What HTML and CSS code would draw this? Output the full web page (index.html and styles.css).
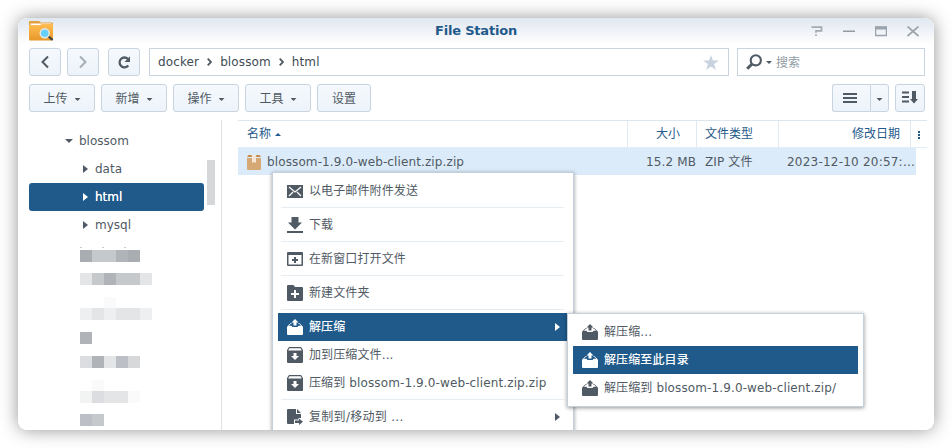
FILE: index.html
```html
<!DOCTYPE html>
<html lang="zh-CN">
<head>
<meta charset="utf-8">
<title>File Station</title>
<link rel="stylesheet" href="styles.css">
</head>
<body>
<svg class="sprite" width="0" height="0">
  <symbol id="extract" viewBox="0 0 16 16"><path d="M8 0l3.500 3.500H9.500V6.500h-3V3.500h-2z"/><path d="M4.500 4.500H3.500L.800 7.500M11.500 4.500h1L15.200 7.500" fill="none" stroke="currentColor" stroke-width=".9"/><path d="M0 8h16v7q0 1-1 1H1q-1 0-1-1zM0 8l1-1.200h3.500L5.500 8zM16 8l-1-1.200h-3.500L10.500 8z"/></symbol>
  <symbol id="archive" viewBox="0 0 16 16"><path fill-rule="evenodd" d="M2 0h12l2 3v12q0 1-1 1H1q-1 0-1-1V3zM2.400 1.200L1.200 3.500h13.600l-1.200-2.300zM6.500 6v3H4l4 4 4-4H9.500V6z"/></symbol>
</svg>
<main class="window">
  <header class="titlebar">
    <svg class="app-icon" width="24" height="20" viewBox="0 0 24 20">
      <defs><linearGradient id="fold" x1="0" y1="0" x2="0" y2="1"><stop offset="0" stop-color="#ffbd51"/><stop offset="1" stop-color="#e8982a"/></linearGradient></defs>
      <path fill="#e3a040" d="M0 1q0-1 1-1h9l2 1.500h11q1 0 1 1V7H0z"/><path fill="#fff" d="M1.500 2.500h21V5h-21z"/>
      <path fill="url(#fold)" d="M0 4h11l2-1h11v15q0 1.500-1 1.500H1q-1 0-1-1.500z"/>
      <path d="M19 15l4.500 4" stroke="#3a4046" stroke-width="2"/><circle cx="15.700" cy="12.200" r="4.500" fill="#66d0fa" stroke="#e5e8e3" stroke-width="1.400"/>
    </svg>
    <h1>File Station</h1>
    <div class="controls">
      <svg width="12" height="11" viewBox="0 0 12 11"><path d="M.500 1.200h10v3.600H5v2M5 8.200v1.800" fill="none" stroke="#a2a9b0" stroke-width="1.700"/></svg>
      <svg width="12" height="11" viewBox="0 0 12 11"><path d="M0 5.200h12" stroke="#929ba3" stroke-width="1.500"/></svg>
      <svg width="12" height="11" viewBox="0 0 12 11"><path d="M.6 1v8.500h10.800V1z" fill="none" stroke="#9ba4ac" stroke-width="1.300"/><path d="M0 .5h12v3H0z" fill="#9ba4ac"/></svg>
      <svg width="12" height="11" viewBox="0 0 12 11"><path d="M.5.500l11 9.500M11.500.500l-11 9.500" stroke="#9da5ac" stroke-width="1.700"/></svg>
    </div>
  </header>

  <nav class="navrow">
    <button class="btn nav"><svg width="8" height="14" viewBox="0 0 8 14"><path d="M7 1.500L1.500 7 7 12.500" fill="none" stroke="#505a64" stroke-width="2"/></svg></button>
    <button class="btn nav fwd"><svg width="8" height="14" viewBox="0 0 8 14"><path d="M1 1.500L6.500 7 1 12.500" fill="none" stroke="#a5adb5" stroke-width="2"/></svg></button>
    <button class="btn nav reload"><svg width="13" height="13" viewBox="0 0 13 13"><path d="M10.300 9.500A4.900 4.900 0 1 1 10 3" fill="none" stroke="#505a64" stroke-width="2.300"/><path d="M12 .300v5.700H6.500z" fill="#505a64"/></svg></button>
    <div class="address">
      <span>docker</span><svg class="sep" width="5" height="8" viewBox="0 0 5 8"><path d="M.7.700L4 4 .7 7.300" /></svg><span>blossom</span><svg class="sep" width="5" height="8" viewBox="0 0 5 8"><path d="M.7.700L4 4 .7 7.300" /></svg><span>html</span>
      <svg class="star" width="16" height="15" viewBox="0 0 16 15"><path d="M8 0l1.900 5.600H16l-5 3.500 1.900 5.900L8 11.400 3.100 15 5 9.100 0 5.600h6.100z" fill="#c8d3df"/></svg>
    </div>
    <div class="search">
      <svg width="16" height="16" viewBox="0 0 16 16"><circle cx="9.800" cy="6.300" r="5.100" fill="none" stroke="#505a64" stroke-width="2.100"/><path d="M6 10l-4.800 4.800" stroke="#505a64" stroke-width="3"/></svg>
      <i class="down"></i><span class="cjk">搜索</span>
    </div>
  </nav>

  <div class="toolbar">
    <button class="btn"><span class="cjk">上传</span><i class="down"></i></button>
    <button class="btn"><span class="cjk">新增</span><i class="down"></i></button>
    <button class="btn"><span class="cjk">操作</span><i class="down"></i></button>
    <button class="btn"><span class="cjk">工具</span><i class="down"></i></button>
    <button class="btn plain"><span class="cjk">设置</span></button>
    <div class="split">
      <button class="btn view"><svg width="14" height="10" viewBox="0 0 14 10"><path d="M0 1h14M0 5h14M0 9h14" stroke="#505a64" stroke-width="2"/></svg></button>
      <button class="btn pick"><i class="down"></i></button>
    </div>
    <button class="btn sort"><svg width="16" height="13" viewBox="0 0 16 13"><path d="M0 1.500h7M0 6h7M0 10.500h7" stroke="#505a64" stroke-width="2"/><path d="M10 0h4v8h2l-4 4.500L8 8h2z" fill="#505a64"/></svg></button>
  </div>

  <div class="body">
    <aside class="sidebar">
      <ul class="tree">
        <li class="root"><i class="down wide"></i>blossom</li>
        <li><i class="right"></i>data</li>
        <li class="selected"><i class="right"></i>html</li>
        <li><i class="right"></i>mysql</li>
      </ul>
      <div class="masked">
        <div class="specks"><i></i><i></i><i></i></div>
        <div class="blocks r1"><b class="s9"></b><b class="s6"></b><b class="s6"></b><b class="s8"></b><b class="s9"></b></div>
        <div class="blocks r2"><b class="s3"></b><b class="s6"></b><b class="s8"></b><b class="s6"></b><b class="s6"></b><b class="s3"></b></div>
        <div class="blocks r3"><b></b><b></b><b class="s0"></b></div>
        <div class="blocks"><b class="s2"></b><b class="s3"></b><b class="s2"></b><b class="s3"></b><b class="s3"></b><b class="s2"></b></div>
        <div class="blocks r4"><b class="s8"></b></div>
        <div class="blocks r5"><b class="s4"></b><b class="s8"></b><b class="s3"></b><b class="s7"></b><b class="s5"></b></div>
        <div class="blocks r6"><b></b><b class="s0"></b></div>
        <div class="blocks"><b class="s1"></b><b class="s4"></b><b class="s3"></b><b class="s3"></b><b class="s0"></b></div>
        <div class="blocks r7"><b class="s7"></b><b class="s6"></b></div>
      </div>
      <div class="thumb"></div>
    </aside>
    <section class="files">
      <div class="row head">
        <div class="name">名称<i class="up"></i></div><div class="size">大小</div><div class="type">文件类型</div><div class="date">修改日期</div>
        <div class="more"><svg width="2" height="10" viewBox="0 0 2 10"><path d="M0 1h2v2H0zM0 4h2v2H0zM0 7h2v2H0z" fill="#1f5a8b"/></svg></div>
      </div>
      <div class="row file">
        <div class="name"><svg width="14" height="15" viewBox="0 0 14 15"><path fill="#d5a876" d="M0 3h14v11q0 1-1 1H1q-1 0-1-1z"/><path fill="#c78947" d="M1.500 0h3.300v2H0zM9.200 0h3.300L14 2H9.200z"/><path fill="#f5e6d5" d="M5 0h4v8l-2-1-2 1z"/></svg><span>blossom-1.9.0-web-client.zip.zip</span></div>
        <div class="size">15.2 MB</div><div class="type">ZIP 文件</div><div class="date">2023-12-10 20:57:...</div>
      </div>
    </section>
  </div>

  <div class="menu main">
    <div class="item"><svg width="16" height="13" viewBox="0 0 16 13"><path d="M0 0h16v13H0z"/><path d="M2 2l6 5 6-5M2 11l4-4M14 11l-4-4" fill="none" stroke="#fff" stroke-width="1.200"/></svg>以电子邮件附件发送</div>
    <hr>
    <div class="item"><svg width="16" height="16" viewBox="0 0 16 16"><path d="M4.500 0h7v5.500H15l-7 7-7-7h3.500zM0 14h16v2H0z"/></svg>下载</div>
    <hr>
    <div class="item"><svg width="16" height="14" viewBox="0 0 16 14"><path fill-rule="evenodd" d="M1 0h14q1 0 1 1v12q0 1-1 1H1q-1 0-1-1V1q0-1 1-1zM1.500 3v9.500h13V3z"/><path d="M7 5h2v2h2v2H9v2H7V9H5V7h2z"/></svg>在新窗口打开文件</div>
    <hr>
    <div class="item"><svg width="16" height="16" viewBox="0 0 16 16"><path fill-rule="evenodd" d="M1 0h5.500L8 2h7q1 0 1 1v12q0 1-1 1H1q-1 0-1-1V1q0-1 1-1zM7 5v3H4v2h3v3h2v-3h3V8H9V5z"/></svg>新建文件夹</div>
    <hr>
    <div class="item active"><svg width="16" height="16"><use href="#extract"/></svg>解压缩<i class="right"></i></div>
    <div class="item"><svg width="16" height="16"><use href="#archive"/></svg>加到压缩文件...</div>
    <div class="item"><svg width="16" height="16"><use href="#archive"/></svg>压缩到 blossom-1.9.0-web-client.zip.zip</div>
    <hr>
    <div class="item wider"><svg width="16" height="16" viewBox="0 0 16 16"><path d="M1 0h8v5h5v4h-2.500v1.500H7v4.500H1q-1 0-1-1V1q0-1 1-1zM10 0l4 4h-4zM8 11.500h4V9.500l4 3.200-4 3.300v-2H8z"/></svg>复制到/移动到 ...<i class="right"></i></div>
  </div>
  <div class="menu sub">
    <div class="item"><svg width="16" height="16"><use href="#extract"/></svg>解压缩...</div>
    <div class="item active"><svg width="16" height="16"><use href="#extract"/></svg>解压缩至此目录</div>
    <div class="item"><svg width="16" height="16"><use href="#extract"/></svg>解压缩到 blossom-1.9.0-web-client.zip/</div>
  </div>
</main>
</body>
</html>
```
FILE: styles.css
```css
* { box-sizing: border-box; }
body {
  margin: 0; height: 448px; padding: 18px; overflow: hidden; background: #fff;
  font: 12px/28px "DejaVu Sans", "Noto Sans CJK SC", sans-serif; color: #505a64;
}
svg { display: block; flex: none; fill: currentColor; }
i, b { display: block; flex: none; }
.sprite { position: absolute; }
.window {
  position: relative; width: 916px; height: 412px; overflow: hidden;
  display: flex; flex-direction: column; border-radius: 9px; background: #fff;
}
body::before {
  content: ""; position: absolute; left: 18px; top: 18px; width: 916px; height: 412px;
  border-radius: 9px; box-shadow: 0 0 18px rgba(0, 0, 0, .42);
}

.down { width: 6px; height: 3px; background: #505a64; clip-path: polygon(0 0, 100% 0, 50% 100%); }
.down.wide { width: 8px; height: 4px; }
.up { width: 6px; height: 3px; background: #1f5a8b; clip-path: polygon(0 100%, 100% 100%, 50% 0); }
.right { border: 4px solid transparent; border-left: 5px solid currentColor; border-right: 0; }
.cjk { padding-top: 2px; }

.titlebar {
  height: 30px; flex: none; padding: 3px 15px 0 11px; display: grid;
  grid-template-columns: 120px 1fr 120px; align-items: start;
  background: linear-gradient(#e0e7f0, #fff 27px);
}
.titlebar h1 { margin: -4px 0 0 4px; text-align: center; font-size: 13px; line-height: 28px; color: #1f5a8b; letter-spacing: -.2px; }
.controls { display: flex; justify-content: flex-end; gap: 20px; padding-top: 5px; }

.btn {
  height: 28px; padding: 0; border: 1px solid #c8d5e1; border-radius: 3px; color: #505a64;
  background: linear-gradient(#f5f9fe, #edf3f9); font: inherit; line-height: 26px;
  display: flex; align-items: center; justify-content: center;
}
.navrow { height: 28px; flex: none; display: flex; padding: 0 9px 0 11px; }
.nav { width: 32px; margin-right: 6px; }
.nav.fwd, .nav.reload { margin-right: 9px; }
.address, .search { border: 1px solid #c8d5e1; display: flex; align-items: center; line-height: 26px; }
.address { width: 580px; padding: 0 9px 0 8px; margin-right: 8px; color: #414b55; letter-spacing: .12px; }
.address .sep { margin: 0 8px; fill: none; stroke: #505a64; stroke-width: 1.8; }
.star { margin-left: auto; }
.search { width: 188px; padding-left: 8px; color: #929ca5; }
.search .down { margin: 1px 4px 0; }

.toolbar { display: flex; flex: none; gap: 6px; padding: 8px 9px 8px 11px; }
.toolbar .btn { width: 66px; }
.toolbar .btn > .down { margin: 3px 0 0 7px; }
.toolbar .plain { width: 54px; }
.split { display: flex; margin-left: auto; }
.toolbar .view { width: 38px; border-right: 0; border-radius: 3px 0 0 3px; padding-right: 3px; }
.toolbar .pick { width: 19px; border-radius: 0 3px 3px 0; }
.toolbar .pick > .down { margin-left: 0; }
.toolbar .sort { width: 30px; padding: 0 1px 1px 0; }

.body { flex: 1; min-height: 0; display: flex; }
.sidebar { position: relative; width: 204px; flex: none; padding: 7px 0 0 11px; border-right: 1px solid #dfe2e5; overflow: hidden; }
.tree { list-style: none; margin: 0; padding: 0; width: 175px; }
.tree li { height: 28px; display: flex; align-items: center; padding-left: 54px; border-radius: 3px; }
.tree .right { margin-right: 7px; }
.tree .root { padding-left: 36px; }
.tree .wide { margin-right: 6px; }
.tree .selected { background: #1f5a8b; color: #fff; text-shadow: 0 0 .5px #fff; }
.thumb { position: absolute; left: 189px; top: 40px; width: 8px; height: 45px; background: #d5d7d9; }

.masked { padding-left: 51px; padding-top: 8px; }
.specks { display: flex; height: 2px; gap: 20px; }
.specks i { width: 2px; height: 1px; background: #c9ccd0; }
.blocks { display: flex; height: 12px; }
.blocks b { width: 12px; }
.r1 { margin-top: 1px; }
.r2 { margin: 11px 0 12px; }
.r4, .r5 { margin: 12px 0; }
.r3, .r6 { height: 11px; }
.r7 { margin-top: 11px; }
.s0 { background: #fafafb; } .s1 { background: #f2f4f4; } .s2 { background: #edeff0; }
.s3 { background: #e3e5e7; } .s4 { background: #dbdde0; } .s5 { background: #d6d8da; }
.s6 { background: #c5c9cc; } .s7 { background: #bcc0c6; } .s8 { background: #b0b4b9; } .s9 { background: #a9adb1; }

.files { flex: 1; margin: 0 7px 0 16px; }
.row { display: grid; grid-template-columns: 390px 69px 82px 132px 16px; height: 27px; }
.head { height: 28px; border-top: 1px solid #dce6ef; border-bottom: 1px solid #e4edf5; color: #1f5a8b; line-height: 27px; }
.head > div { border-right: 1px solid #dfe9f2; }
.head > .more { border: 0; }
.name { display: flex; align-items: center; padding-left: 9px; }
.head .up { margin-left: 4px; }
.head .size { text-align: right; padding-right: 16px; }
.head .date { text-align: right; padding-right: 10px; }
.type { padding-left: 8px; }
.more { display: flex; align-items: center; padding-left: 7px; }
.file { width: 678px; grid-template-columns: 390px 69px 82px 137px; background: #dcebf9; line-height: 28px; white-space: nowrap; letter-spacing: .12px; }
.file .name { gap: 6px; line-height: 26px; }
.file .name span { margin-top: -1px; }
.file .size { text-align: right; padding-right: 1px; }
.file .date { text-align: right; padding-right: 1px; letter-spacing: .22px; }

.menu { position: absolute; padding: 4px 5px; border: 1px solid #c4d0dc; background: #fff; box-shadow: 0 1px 4px rgba(0, 0, 0, .42); letter-spacing: .12px; }
.main { left: 254px; top: 154px; width: 302px; height: 270px; }
.sub { left: 549px; top: 295px; width: 297px; height: 94px; }
.item { height: 28px; padding: 0 8px 0 9px; display: flex; align-items: center; white-space: nowrap; }
.item svg { margin-right: 6px; }
.item .right { margin-left: auto; }
.wider { letter-spacing: .3px; }
.menu .active { background: #1f5a8b; color: #fff; font-weight: 500; }
.menu hr { height: 1px; border: 0; margin: 2px 4px 3px 3px; background: #e5ecf2; }
```
